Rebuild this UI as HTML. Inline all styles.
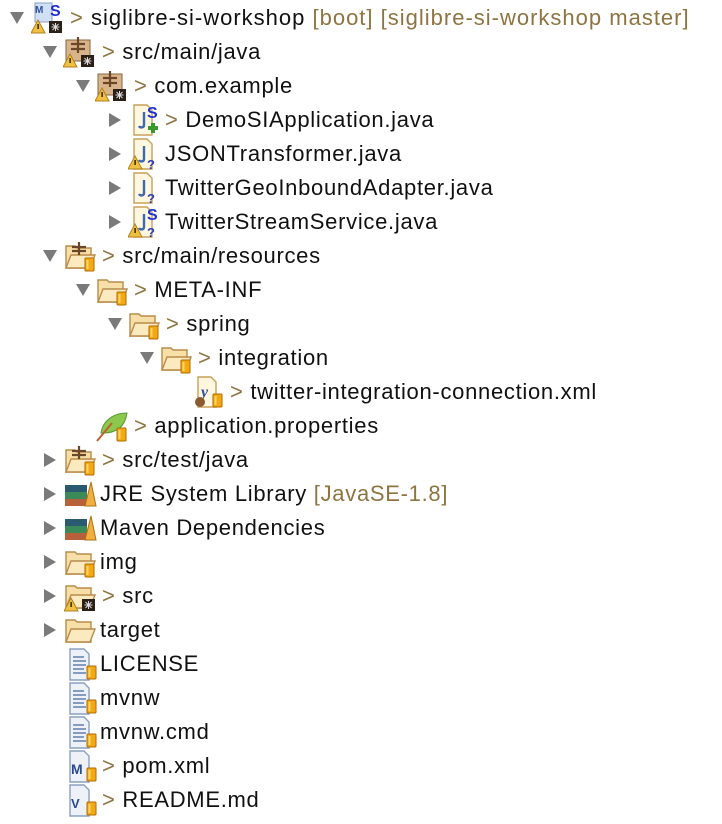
<!DOCTYPE html>
<html><head><meta charset="utf-8"><style>
body{margin:0;width:722px;height:824px;background:#fff;position:relative;overflow:hidden;font-family:"Liberation Sans",Arial,sans-serif;font-size:22px;letter-spacing:0.7px;color:#111}
.t{position:absolute;white-space:nowrap;line-height:34px;height:34px}
.g{color:#8e7440}
.d{position:absolute;width:0;height:0;border-left:7px solid transparent;border-right:7px solid transparent;border-top:12px solid #7a7a7a}
.rt{position:absolute;width:0;height:0;border-top:7px solid transparent;border-bottom:7px solid transparent;border-left:12px solid #7a7a7a}
svg.i{position:absolute;width:34px;height:34px}
</style></head><body>
<svg width="0" height="0" style="position:absolute">
<defs>
<symbol id="warn" viewBox="0 0 34 34"><path d="M7 19 L14 32 H0 Z" fill="#f0c040" stroke="#b08020"/><rect x="6.5" y="23" width="1.2" height="5" fill="#000"/></symbol>
<symbol id="dark" viewBox="0 0 34 34"><rect x="18" y="20" width="13" height="12" fill="#2a2018"/><path d="M24.5 22v8M20.5 26h8M21.5 23l6 6M27.5 23l-6 6" stroke="#ddd" stroke-width="1"/></symbol>
<symbol id="jar" viewBox="0 0 34 34"><rect x="21" y="19" width="9" height="13" rx="1" fill="#f3a914" stroke="#b06a00"/><rect x="22.5" y="21" width="2" height="9" fill="#ffd66a"/></symbol>
<symbol id="pkg" viewBox="0 0 34 34"><rect x="3" y="5" width="24" height="21" fill="#d9b48a" stroke="#8a6440"/><path d="M15 2v16M8 9h14M8 14h14" stroke="#6b4628" stroke-width="2.2"/></symbol>
<symbol id="fold" viewBox="0 0 34 34"><path d="M2 7h9l2 2h14v20H2Z" fill="#f7dfa8" stroke="#b98b4a" stroke-width="1.4"/><path d="M2 29l5-13h24l-5 13Z" fill="#fbe9c0" stroke="#b98b4a" stroke-width="1.4"/></symbol>
<symbol id="java" viewBox="0 0 34 34"><path d="M6 2h13l5 5v25H6Z" fill="#fff7e0" stroke="#c9a05a" stroke-width="1.4"/><path d="M16 9v13c0 3-4 3-5 1" stroke="#3a6ab0" stroke-width="2.4" fill="none"/></symbol>
<symbol id="s" viewBox="0 0 34 34"><text x="19" y="15" font-family="Liberation Sans" font-weight="bold" font-size="16" fill="#2030d0">S</text></symbol>
<symbol id="q" viewBox="0 0 34 34"><text x="19" y="32" font-family="Liberation Sans" font-weight="bold" font-size="13" fill="#2a40b0">?</text></symbol>
<symbol id="lib" viewBox="0 0 34 34"><rect x="1" y="22" width="22" height="7" fill="#b8603a"/><rect x="1" y="15" width="22" height="7" fill="#3a8a5a"/><rect x="1" y="8" width="22" height="7" fill="#2a5a70"/><path d="M21 29l6-24 5 24Z" fill="#f0b040" stroke="#b07010"/></symbol>
<symbol id="txt" viewBox="0 0 34 34"><path d="M4 2h14l5 5v26H4Z" fill="#eef2f8" stroke="#8aa0c0" stroke-width="1.4"/><path d="M7 10h11M7 14h13M7 18h13M7 22h11M7 26h13" stroke="#6080b0" stroke-width="1.5"/></symbol>
</defs></svg>

<div class="d" style="left:10px;top:12px"></div>
<svg class="i" style="left:31px;top:1px"><rect x="4" y="2" width="17" height="19" fill="#cfe0f4" stroke="#8aa0c0"/><text x="4" y="12" font-size="10" font-weight="bold" fill="#3050a0" font-family="Liberation Sans">M</text><use href="#s"/><use href="#warn"/><use href="#dark"/></svg>
<div class="t" style="left:70px;top:1px;letter-spacing:1px"><span class="g">&gt;</span> siglibre-si-workshop <span class="g">[boot] [siglibre-si-workshop master]</span></div>

<div class="d" style="left:43px;top:46px"></div>
<svg class="i" style="left:63px;top:35px"><use href="#pkg"/><use href="#warn"/><use href="#dark"/></svg>
<div class="t" style="left:102px;top:35px"><span class="g">&gt;</span> src/main/java</div>

<div class="d" style="left:76px;top:80px"></div>
<svg class="i" style="left:95px;top:69px"><use href="#pkg"/><use href="#warn"/><use href="#dark"/></svg>
<div class="t" style="left:134px;top:69px"><span class="g">&gt;</span> com.example</div>

<div class="rt" style="left:109px;top:113px"></div>
<svg class="i" style="left:128px;top:103px"><use href="#java"/><use href="#s"/><path d="M20 25h10M25 20v10" stroke="#3a9a30" stroke-width="4"/></svg>
<div class="t" style="left:165px;top:103px"><span class="g">&gt;</span> DemoSIApplication.java</div>

<div class="rt" style="left:109px;top:147px"></div>
<svg class="i" style="left:128px;top:137px"><use href="#java"/><use href="#q"/><use href="#warn"/></svg>
<div class="t" style="left:165px;top:137px">JSONTransformer.java</div>

<div class="rt" style="left:109px;top:181px"></div>
<svg class="i" style="left:128px;top:171px"><use href="#java"/><use href="#q"/></svg>
<div class="t" style="left:165px;top:171px">TwitterGeoInboundAdapter.java</div>

<div class="rt" style="left:109px;top:215px"></div>
<svg class="i" style="left:128px;top:205px"><use href="#java"/><use href="#s"/><use href="#q"/><use href="#warn"/></svg>
<div class="t" style="left:165px;top:205px">TwitterStreamService.java</div>

<div class="d" style="left:43px;top:250px"></div>
<svg class="i" style="left:64px;top:239px"><use href="#fold"/><path d="M15 3v13M8 8h14M8 12h14" stroke="#6b4628" stroke-width="2.2"/><use href="#jar"/></svg>
<div class="t" style="left:102px;top:239px"><span class="g">&gt;</span> src/main/resources</div>

<div class="d" style="left:76px;top:284px"></div>
<svg class="i" style="left:96px;top:273px"><use href="#fold"/><use href="#jar"/></svg>
<div class="t" style="left:134px;top:273px"><span class="g">&gt;</span> META-INF</div>

<div class="d" style="left:108px;top:318px"></div>
<svg class="i" style="left:128px;top:307px"><use href="#fold"/><use href="#jar"/></svg>
<div class="t" style="left:166px;top:307px"><span class="g">&gt;</span> spring</div>

<div class="d" style="left:140px;top:352px"></div>
<svg class="i" style="left:160px;top:341px"><use href="#fold"/><use href="#jar"/></svg>
<div class="t" style="left:198px;top:341px"><span class="g">&gt;</span> integration</div>

<svg class="i" style="left:192px;top:375px"><path d="M6 2h13l5 5v25H6Z" fill="#fff7e0" stroke="#c9a05a" stroke-width="1.4"/><text x="9" y="22" font-size="16" font-weight="bold" fill="#3050a0" font-family="Liberation Serif" font-style="italic">y</text><circle cx="8" cy="27" r="5" fill="#8a5a30"/><use href="#jar"/></svg>
<div class="t" style="left:230px;top:375px"><span class="g">&gt;</span> twitter-integration-connection.xml</div>

<svg class="i" style="left:96px;top:409px"><path d="M5 24C7 11 18 4 31 4C29 18 20 24 7 24Z" fill="#8cc850" stroke="#5a9a30"/><path d="M1 32L16 14" stroke="#c06030" stroke-width="2"/><use href="#jar"/></svg>
<div class="t" style="left:134px;top:409px"><span class="g">&gt;</span> application.properties</div>

<div class="rt" style="left:44px;top:453px"></div>
<svg class="i" style="left:64px;top:443px"><use href="#fold"/><path d="M15 3v13M8 8h14M8 12h14" stroke="#6b4628" stroke-width="2.2"/><use href="#jar"/></svg>
<div class="t" style="left:102px;top:443px"><span class="g">&gt;</span> src/test/java</div>

<div class="rt" style="left:44px;top:487px"></div>
<svg class="i" style="left:64px;top:477px"><use href="#lib"/></svg>
<div class="t" style="left:100px;top:477px">JRE System Library <span class="g">[JavaSE-1.8]</span></div>

<div class="rt" style="left:44px;top:521px"></div>
<svg class="i" style="left:64px;top:511px"><use href="#lib"/></svg>
<div class="t" style="left:100px;top:511px">Maven Dependencies</div>

<div class="rt" style="left:44px;top:555px"></div>
<svg class="i" style="left:64px;top:545px"><use href="#fold"/><use href="#jar"/></svg>
<div class="t" style="left:100px;top:545px">img</div>

<div class="rt" style="left:44px;top:589px"></div>
<svg class="i" style="left:64px;top:579px"><use href="#fold"/><use href="#warn"/><use href="#dark"/></svg>
<div class="t" style="left:102px;top:579px"><span class="g">&gt;</span> src</div>

<div class="rt" style="left:44px;top:623px"></div>
<svg class="i" style="left:64px;top:613px"><use href="#fold"/></svg>
<div class="t" style="left:100px;top:613px">target</div>

<svg class="i" style="left:66px;top:647px"><use href="#txt"/><use href="#jar"/></svg>
<div class="t" style="left:100px;top:647px">LICENSE</div>
<svg class="i" style="left:66px;top:681px"><use href="#txt"/><use href="#jar"/></svg>
<div class="t" style="left:100px;top:681px">mvnw</div>
<svg class="i" style="left:66px;top:715px"><use href="#txt"/><use href="#jar"/></svg>
<div class="t" style="left:100px;top:715px">mvnw.cmd</div>
<svg class="i" style="left:66px;top:749px"><path d="M4 2h14l5 5v26H4Z" fill="#eef2f8" stroke="#8aa0c0" stroke-width="1.4"/><text x="5" y="25" font-size="14" font-weight="bold" fill="#2a4a90" font-family="Liberation Sans">M</text><use href="#jar"/></svg>
<div class="t" style="left:102px;top:749px"><span class="g">&gt;</span> pom.xml</div>
<svg class="i" style="left:66px;top:783px"><path d="M4 2h14l5 5v26H4Z" fill="#eef2f8" stroke="#8aa0c0" stroke-width="1.4"/><text x="5" y="25" font-size="13" font-weight="bold" fill="#2a4a90" font-family="Liberation Sans">V</text><use href="#jar"/></svg>
<div class="t" style="left:102px;top:783px"><span class="g">&gt;</span> README.md</div>
</body></html>
